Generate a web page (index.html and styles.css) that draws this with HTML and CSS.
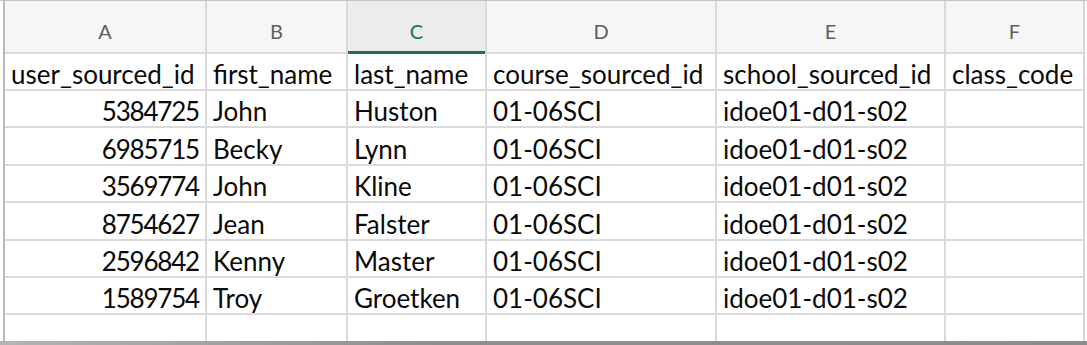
FILE: index.html
```html
<!DOCTYPE html>
<html>
<head>
<meta charset="utf-8">
<link rel="stylesheet" href="styles.css">
</head>
<body>
<div class="frame">
  <div class="sheet">
    <div class="grid">
      <div class="hd">A</div>
      <div class="hd">B</div>
      <div class="hd sel">C</div>
      <div class="hd">D</div>
      <div class="hd">E</div>
      <div class="hd">F</div>

      <div class="c">user_sourced_id</div>
      <div class="c">first_name</div>
      <div class="c">last_name</div>
      <div class="c">course_sourced_id</div>
      <div class="c">school_sourced_id</div>
      <div class="c">class_code</div>

      <div class="c num">5384725</div>
      <div class="c">John</div>
      <div class="c">Huston</div>
      <div class="c">01-06SCI</div>
      <div class="c">idoe01-d01-s02</div>
      <div class="c"></div>

      <div class="c num">6985715</div>
      <div class="c">Becky</div>
      <div class="c">Lynn</div>
      <div class="c">01-06SCI</div>
      <div class="c">idoe01-d01-s02</div>
      <div class="c"></div>

      <div class="c num">3569774</div>
      <div class="c">John</div>
      <div class="c">Kline</div>
      <div class="c">01-06SCI</div>
      <div class="c">idoe01-d01-s02</div>
      <div class="c"></div>

      <div class="c num">8754627</div>
      <div class="c">Jean</div>
      <div class="c">Falster</div>
      <div class="c">01-06SCI</div>
      <div class="c">idoe01-d01-s02</div>
      <div class="c"></div>

      <div class="c num">2596842</div>
      <div class="c">Kenny</div>
      <div class="c">Master</div>
      <div class="c">01-06SCI</div>
      <div class="c">idoe01-d01-s02</div>
      <div class="c"></div>

      <div class="c num">1589754</div>
      <div class="c">Troy</div>
      <div class="c">Groetken</div>
      <div class="c">01-06SCI</div>
      <div class="c">idoe01-d01-s02</div>
      <div class="c"></div>

      <div class="c"></div>
      <div class="c"></div>
      <div class="c"></div>
      <div class="c"></div>
      <div class="c"></div>
      <div class="c"></div>
    </div>
  </div>
  <div class="shadow"></div>
</div>
</body>
</html>
```

FILE: styles.css
```css
html, body {
  margin: 0;
  padding: 0;
  background: #ffffff;
}

.frame {
  width: 1087px;
  height: 345px;
  overflow: hidden;
  display: flex;
  flex-direction: column;
}

.sheet {
  border-top: 1px solid #c2c2c2;
  padding-left: 3px;
  flex: 1;
  display: flex;
  overflow: hidden;
}

.grid {
  display: grid;
  grid-template-columns: 200px 139px 137px 228px 227px 137px;
  grid-template-rows: 51px 35px 35px 36px 35px 36px 35px 35px 30px;
  column-gap: 2px;
  row-gap: 2px;
  background: #dadada;
  border-left: 2px solid #b9b9b9;
  border-right: 2px solid #d6d6d6;
  align-self: flex-start;
}

.hd {
  background: #f6f6f6;
  color: #5e5e5e;
  font-family: Lato, "Liberation Sans", sans-serif;
  font-size: 20px;
  line-height: 1;
  display: flex;
  justify-content: center;
  align-items: flex-end;
  padding-bottom: 11px;
  box-sizing: border-box;
  position: relative;
}

.hd.sel {
  background: #ececec;
  color: #1f7246;
}

.hd.sel::after {
  content: "";
  position: absolute;
  left: 0;
  right: 0;
  bottom: -2px;
  height: 3px;
  background: #1e7145;
}

.c {
  background: #ffffff;
  color: #0a0a0a;
  font-family: Lato, "Liberation Sans", sans-serif;
  font-size: 26px;
  display: flex;
  align-items: flex-end;
  padding: 0 5px 2px 6px;
  box-sizing: border-box;
  white-space: nowrap;
  line-height: 1;
}

.num {
  justify-content: flex-end;
  letter-spacing: -1.2px;
  padding-right: 6px;
}

.shadow {
  height: 4px;
  background: linear-gradient(to right, #b4b4b4, #8f8f8f 40%, #8c8c8c);
}
```
